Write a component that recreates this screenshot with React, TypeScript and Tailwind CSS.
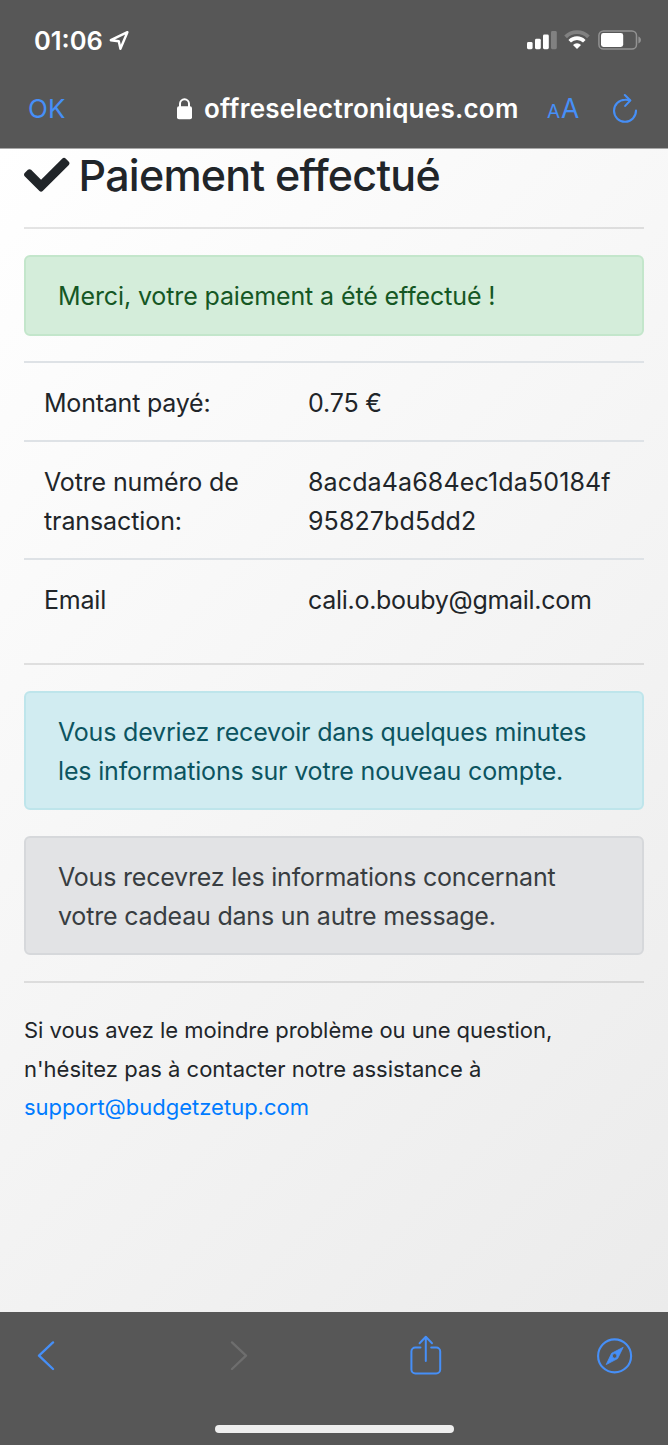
import type { ReactNode } from 'react';
import { FaCheck } from 'react-icons/fa';

const DETAILS = [
  {
    label: [{ text: 'Montant payé:', tracking: 'tracking-[-0.22px]' }],
    value: [{ text: '0.75 €', tracking: 'tracking-[-0.15px]' }]
  },
  {
    label: [
      { text: 'Votre numéro de', tracking: 'tracking-[-0.14px]' },
      { text: 'transaction:', tracking: 'tracking-[-0.1px]' }
    ],
    value: [
      { text: '8acda4a684ec1da50184f', tracking: 'tracking-[0.13px]' },
      { text: '95827bd5dd2', tracking: 'tracking-[0.1px]' }
    ]
  },
  {
    label: [{ text: 'Email', tracking: 'tracking-[-0.2px]' }],
    value: [{ text: 'cali.o.bouby@gmail.com', tracking: 'tracking-[-0.29px]' }]
  }
];

function Line({ tracking = '', children }: { tracking?: string; children: ReactNode }) {
  return <span className={`block whitespace-nowrap ${tracking}`}>{children}</span>;
}

function Rule() {
  return <hr className="h-[2px] border-0 bg-black/10" />;
}

function Alert({ tone, children }: { tone: string; children: ReactNode }) {
  return (
    <div className={`rounded-[6px] border-2 px-[32px] pt-[20px] text-[25px] leading-[39px] ${tone}`}>{children}</div>
  );
}

function StatusBar() {
  return (
    <div className="flex h-[80px] items-center justify-between pl-[34px] pr-[26px] text-white">
      <div className="flex items-center gap-[6px]">
        <span className="pt-[1px] text-[25.5px] font-semibold leading-none">01:06</span>
        <svg width="21" height="21" viewBox="0 0 21 21" fill="none" stroke="currentColor" strokeWidth="2.4" strokeLinejoin="round">
          <path d="M18.4 2.2 1.8 10.2 9.8 11.3 11.4 18.8Z" />
        </svg>
      </div>
      <div className="flex items-center">
        <svg width="30" height="20" viewBox="0 0 30 20" fill="currentColor">
          <rect x="0" y="12" width="5.6" height="7.2" rx="1.4" />
          <rect x="8" y="8.8" width="5.8" height="10.4" rx="1.4" />
          <rect x="16" y="4.6" width="5.8" height="14.6" rx="1.4" />
          <rect x="24" y="1" width="5.8" height="18.2" rx="1.4" fillOpacity="0.25" />
        </svg>
        <svg className="ml-[7px]" width="26" height="20" viewBox="0 0 26 20" fill="none" stroke="currentColor">
          <path d="M1.6 6.8a16.2 16.2 0 0 1 22.8 0" strokeWidth="3.8" strokeOpacity="0.25" />
          <path d="M5.7 11.2a10.3 10.3 0 0 1 14.6 0" strokeWidth="3.6" />
          <path d="M13 19 9 15a5.6 5.6 0 0 1 8 0Z" fill="currentColor" stroke="none" />
        </svg>
        <svg className="ml-[8px]" width="44" height="20" viewBox="0 0 44 20">
          <rect x="0.9" y="0.9" width="37.6" height="18.2" rx="4.6" fill="none" stroke="#929292" strokeWidth="1.5" />
          <rect x="3" y="3" width="22.2" height="14" rx="2.4" fill="white" />
          <path d="M40.4 6.6c3.4 1.2 3.4 5.6 0 6.8Z" fill="#929292" />
        </svg>
      </div>
    </div>
  );
}

function AddressBar() {
  return (
    <div className="flex h-[68px] items-center pl-[28px] pr-[30px] pb-[11px] text-[26px]">
      <span className="w-[148px] text-[#468ff7]">OK</span>
      <svg width="16" height="22" viewBox="0 0 16 22" fill="none">
        <rect x="1" y="8.3" width="15" height="12.9" rx="2" fill="white" />
        <path d="M4 9.5V5.8a4.5 4.5 0 0 1 9 0v3.7" stroke="white" strokeWidth="2" />
      </svg>
      <span className="ml-[12px] w-[343px] whitespace-nowrap font-semibold tracking-[0.24px] text-white">
        offreselectroniques.com
      </span>
      <span className="flex w-[65px] items-baseline gap-px text-[#468ff7]">
        <span className="text-[19px]">A</span>
        <span className="text-[26.5px]">A</span>
      </span>
      <svg width="26" height="31" viewBox="0 0 26 31" fill="none" stroke="#468ff7" strokeWidth="2.1" strokeLinecap="round" strokeLinejoin="round">
        <path d="M24 17.6A11 11 0 1 1 13 6.8q2.6-.2 5 .6" />
        <path d="m12.8 2 5.6 5.4-5.2 5.5" />
      </svg>
    </div>
  );
}

function BrowserToolbar() {
  return (
    <footer className="flex h-[133px] flex-col items-center bg-[#575757]">
      <div className="flex h-[88px] w-full items-center pl-[37px] text-[#468ff7]">
        <svg width="18" height="30" viewBox="0 0 18 30" fill="none" stroke="currentColor" strokeWidth="2.3" strokeLinecap="round" strokeLinejoin="round">
          <path d="M16 1.4 2 14.7 16 28" />
        </svg>
        <svg className="ml-[175px] text-[#6e6e6e]" width="18" height="30" viewBox="0 0 18 30" fill="none" stroke="currentColor" strokeWidth="2.3" strokeLinecap="round" strokeLinejoin="round">
          <path d="m2 1.4 14 13.3L2 28" />
        </svg>
        <svg className="mb-[3px] ml-[162px]" width="32" height="40" viewBox="0 0 32 40" fill="none" stroke="currentColor" strokeWidth="2" strokeLinecap="round" strokeLinejoin="round">
          <path d="M10.5 12.5H5.4a4 4 0 0 0-4 4v18a4 4 0 0 0 4 4h20.8a4 4 0 0 0 4-4v-18a4 4 0 0 0-4-4h-5" />
          <path d="M15.8 26V2M9.6 8.2l6.2-6.4L22 8.2" />
        </svg>
        <svg className="ml-[155px]" width="36" height="36" viewBox="0 0 36 36" fill="none">
          <circle cx="17.6" cy="17.9" r="16.5" stroke="currentColor" strokeWidth="2.1" />
          <path
            fill="currentColor"
            fillRule="evenodd"
            d="M26.2 9.3 20.6 20.6 9.2 26.6 14.6 15.3ZM17.6 15.6a2.3 2.3 0 1 0 0 4.6 2.3 2.3 0 0 0 0-4.6Z"
            stroke="currentColor"
            strokeWidth="0.8"
            strokeLinejoin="round"
          />
        </svg>
      </div>
      <div className="mt-[25px] h-[8px] w-[239px] rounded-full bg-[#eeeeee]" />
    </footer>
  );
}

export default function App() {
  return (
    <div className="flex h-[1445px] w-[668px] flex-col overflow-hidden font-['Inter',sans-serif]">
      <header className="h-[149px] shrink-0 border-b border-[#a8a8a8] bg-[#575757]">
        <StatusBar />
        <AddressBar />
      </header>

      <main className="h-[1163px] shrink-0 bg-linear-[135deg] from-white to-[#ebebeb] px-[24px] text-[#212529]">
        <h1 className="flex h-[78px] items-start gap-[9px] pt-px text-[43px] font-medium leading-[50px]">
          <FaCheck className="mt-[2px] size-[45.5px]" />
          <span className="whitespace-nowrap tracking-[-0.75px]">Paiement effectué</span>
        </h1>
        <Rule />

        <div className="mt-[26px]">
          <Alert tone="border-[#c3e6cb] bg-[#d4edda] pb-[18px] text-[#155724]">
            <Line tracking="tracking-[-0.12px]">Merci, votre paiement a été effectué !</Line>
          </Alert>
        </div>

        <dl className="mt-[25px] text-[25px] leading-[39px]">
          {DETAILS.map((row) => (
            <div key={row.label[0].text} className="flex border-t-2 border-[#dee2e6] px-[20px] pt-[21px] pb-[17px]">
              <dt className="w-[264px]">
                {row.label.map((line) => (
                  <Line key={line.text} tracking={line.tracking}>{line.text}</Line>
                ))}
              </dt>
              <dd>
                {row.value.map((line) => (
                  <Line key={line.text} tracking={line.tracking}>{line.text}</Line>
                ))}
              </dd>
            </div>
          ))}
        </dl>

        <div className="mt-[26px]">
          <Rule />
        </div>

        <div className="mt-[26px] flex flex-col gap-[26px]">
          <Alert tone="border-[#bee5eb] bg-[#d1ecf1] pb-[17px] text-[#0c5460]">
            <Line tracking="tracking-[-0.19px]">Vous devriez recevoir dans quelques minutes</Line>
            <Line tracking="tracking-[-0.16px]">les informations sur votre nouveau compte.</Line>
          </Alert>
          <Alert tone="border-[#d6d8db] bg-[#e2e3e5] pb-[17px] text-[#383d41]">
            <Line tracking="tracking-[-0.2px]">Vous recevrez les informations concernant</Line>
            <Line tracking="tracking-[-0.19px]">votre cadeau dans un autre message.</Line>
          </Alert>
          <Rule />
        </div>

        <p className="mt-[28px] text-[22px] leading-[38.7px]">
          <Line tracking="tracking-[-0.03px]">Si vous avez le moindre problème ou une question,</Line>
          <Line>n'hésitez pas à contacter notre assistance à</Line>
          <a href="mailto:support@budgetzetup.com" className="text-[#007bff]">
            <Line>support@budgetzetup.com</Line>
          </a>
        </p>
      </main>

      <BrowserToolbar />
    </div>
  );
}
